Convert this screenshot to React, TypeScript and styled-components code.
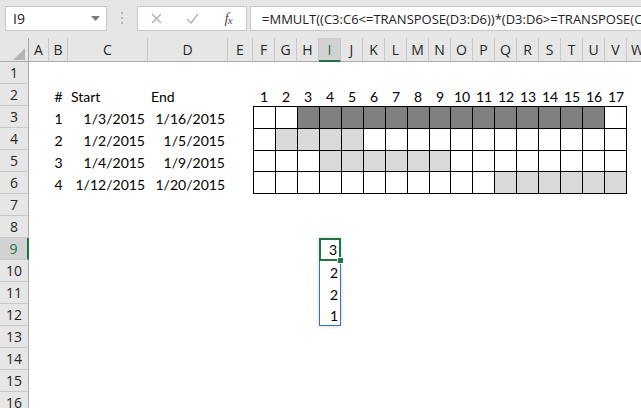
import React from "react";
import styled, { createGlobalStyle } from "styled-components";

const GlobalStyle = createGlobalStyle`
  html, body {
    margin: 0;
    padding: 0;
    background: #ffffff;
  }
  body {
    width: 641px;
    height: 408px;
    overflow: hidden;
  }
`;

const GREEN = "#217346";
const HEADER_BG = "#e6e6e6";
const HEADER_ACTIVE_BG = "#d2d2d2";
const HEADER_LINE = "#c8c8c8";
const HEADER_EDGE = "#ababab";

const COLUMNS = "ABCDEFGHIJKLMNOPQRSTUVW".split("");
const ROW_COUNT = 16;

type Tone = "none" | "dark" | "light";

// day ranges shown in the F3:V6 grid
const spans: [number, number, Tone][] = [
  [3, 16, "dark"],
  [2, 5, "light"],
  [4, 9, "light"],
  [12, 17, "light"],
];

const table = [
  ["1", "1/3/2015", "1/16/2015"],
  ["2", "1/2/2015", "1/5/2015"],
  ["3", "1/4/2015", "1/9/2015"],
  ["4", "1/12/2015", "1/20/2015"],
];

const results = ["3", "2", "2", "1"];

const Window = styled.div`
  width: 641px;
  height: 408px;
  overflow: hidden;
  background: #ffffff;
  display: flex;
  flex-direction: column;
`;

const Toolbar = styled.div`
  flex: none;
  height: 38px;
  box-sizing: border-box;
  padding: 6px 0 0 5px;
  background: ${HEADER_BG};
  display: flex;
  align-items: flex-start;
  font-family: "Open Sans", "Noto Sans", sans-serif;
  font-size: 14px;
  color: #222;
`;

const NameBox = styled.div`
  width: 102px;
  height: 25px;
  box-sizing: border-box;
  border: 1px solid #c6c6c6;
  background: #ffffff;
  display: flex;
  align-items: center;
  justify-content: space-between;
  padding: 0 6px 0 7px;
`;

const Grip = styled.div`
  width: 30px;
  height: 25px;
  display: flex;
  align-items: center;
  justify-content: center;
`;

const FxBox = styled.div`
  width: 110px;
  height: 25px;
  box-sizing: border-box;
  border: 1px solid #c6c6c6;
  background: #ffffff;
  display: flex;
  align-items: center;
`;

const FxSlot = styled.div`
  width: 36px;
  height: 100%;
  display: flex;
  align-items: center;
  justify-content: center;
`;

const FxLabel = styled.span`
  font-family: "Liberation Serif", serif;
  font-style: italic;
  font-size: 15px;
  color: #555;
  letter-spacing: -1px;

  sub {
    font-size: 11px;
    vertical-align: -1px;
  }
`;

const FormulaInput = styled.div`
  flex: 1;
  min-width: 0;
  height: 25px;
  margin-left: 3px;
  box-sizing: border-box;
  border: 1px solid #c6c6c6;
  border-right: none;
  background: #ffffff;
  padding-left: 11px;
  display: flex;
  align-items: center;
  white-space: nowrap;
  overflow: hidden;
  font-size: 13px;
`;

const Sheet = styled.div`
  display: grid;
  grid-template-columns: 29px 20px 19px 80px 80px 25px repeat(18, 22px);
  grid-template-rows: 24px repeat(${ROW_COUNT}, 22px);
  font-family: Lato, "Liberation Sans", sans-serif;
  font-size: 14px;
  color: #000;
`;

const Corner = styled.div`
  grid-column: 1;
  grid-row: 1;
  background: ${HEADER_BG};
  border-right: 1px solid ${HEADER_EDGE};
  border-bottom: 1px solid ${HEADER_EDGE};
  display: flex;
  align-items: flex-end;
  justify-content: flex-end;
  padding: 0 3px 1px 0;
`;

const ColHeader = styled.div<{ $c: number; $active?: boolean }>`
  grid-column: ${(p) => p.$c};
  grid-row: 1;
  box-sizing: border-box;
  background: ${(p) => (p.$active ? HEADER_ACTIVE_BG : HEADER_BG)};
  border-right: 1px solid ${HEADER_LINE};
  border-bottom: ${(p) =>
    p.$active ? `2px solid ${GREEN}` : `1px solid ${HEADER_EDGE}`};
  color: ${(p) => (p.$active ? GREEN : "#262626")};
  font-family: "Open Sans", "Noto Sans", sans-serif;
  font-size: 14px;
  display: flex;
  align-items: center;
  justify-content: center;
  overflow: hidden;
`;

const RowHeader = styled.div<{ $r: number; $active?: boolean }>`
  grid-column: 1;
  grid-row: ${(p) => p.$r};
  box-sizing: border-box;
  background: ${(p) => (p.$active ? HEADER_ACTIVE_BG : HEADER_BG)};
  border-bottom: 1px solid ${HEADER_LINE};
  border-right: ${(p) =>
    p.$active ? `2px solid ${GREEN}` : `1px solid ${HEADER_EDGE}`};
  color: ${(p) => (p.$active ? GREEN : "#262626")};
  font-family: "Open Sans", "Noto Sans", sans-serif;
  font-size: 14px;
  display: flex;
  align-items: center;
  justify-content: center;
`;

const Cell = styled.div<{ $c: number; $r: number; $align: string }>`
  grid-column: ${(p) => p.$c};
  grid-row: ${(p) => p.$r};
  box-sizing: border-box;
  padding: 0 3px 1px;
  display: flex;
  align-items: flex-end;
  justify-content: ${(p) => p.$align};
  line-height: 17px;
  white-space: nowrap;
`;

const Chart = styled.div`
  grid-column: 7 / 24;
  grid-row: 4 / 8;
  display: grid;
  grid-template-columns: repeat(17, 1fr);
  grid-template-rows: repeat(4, 1fr);
  gap: 1px;
  padding: 1px;
  background: #000;
`;

const Day = styled.div<{ $tone: Tone }>`
  background: ${(p) =>
    p.$tone === "dark" ? "#808080" : p.$tone === "light" ? "#d9d9d9" : "#ffffff"};
`;

const Selection = styled.div`
  grid-column: 10;
  grid-row: 10 / 14;
  position: relative;
  box-sizing: border-box;
  border: 1px solid #3b6fc1;
  box-shadow: 0 0 4px rgba(0, 0, 0, 0.18);
  display: grid;
  grid-template-rows: repeat(4, 1fr);
`;

const Result = styled.div<{ $active?: boolean }>`
  position: relative;
  box-sizing: border-box;
  margin: ${(p) => (p.$active ? "-1px -1px 0" : "0")};
  border: ${(p) => (p.$active ? `2px solid ${GREEN}` : "none")};
  padding: 0 2px 1px;
  display: flex;
  align-items: flex-end;
  justify-content: flex-end;
  line-height: 17px;
`;

const FillHandle = styled.div`
  position: absolute;
  right: -5px;
  bottom: -5px;
  width: 5px;
  height: 5px;
  background: ${GREEN};
  border: 1px solid #ffffff;
`;

export default function App() {
  return (
    <>
      <GlobalStyle />
      <Window>
        <Toolbar>
          <NameBox>
            <span>I9</span>
            <svg width="9" height="5" viewBox="0 0 9 5">
              <polygon points="0,0 9,0 4.5,5" fill="#7a7a7a" />
            </svg>
          </NameBox>
          <Grip>
            <svg width="3" height="13" viewBox="0 0 3 13">
              <rect x="0" y="0" width="2" height="2" fill="#b4b4b4" />
              <rect x="0" y="5" width="2" height="2" fill="#b4b4b4" />
              <rect x="0" y="10" width="2" height="2" fill="#b4b4b4" />
            </svg>
          </Grip>
          <FxBox>
            <FxSlot>
              <svg width="11" height="11" viewBox="0 0 11 11">
                <path d="M1 1 L10 10 M10 1 L1 10" stroke="#b0b0b0" strokeWidth="1.3" />
              </svg>
            </FxSlot>
            <FxSlot>
              <svg width="13" height="11" viewBox="0 0 13 11">
                <path d="M1 6 L5 10 L12 1" stroke="#b0b0b0" strokeWidth="1.3" fill="none" />
              </svg>
            </FxSlot>
            <FxSlot>
              <FxLabel>
                f<sub>x</sub>
              </FxLabel>
            </FxSlot>
          </FxBox>
          <FormulaInput>
            =MMULT((C3:C6&lt;=TRANSPOSE(D3:D6))*(D3:D6&gt;=TRANSPOSE(C3:C6)),{"{1;1;1;1}"})
          </FormulaInput>
        </Toolbar>

        <Sheet>
          <Corner>
            <svg width="12" height="12" viewBox="0 0 12 12">
              <polygon points="12,0 12,12 0,12" fill="#b5b5b5" />
            </svg>
          </Corner>
          {COLUMNS.map((letter, i) => (
            <ColHeader key={letter} $c={i + 2} $active={letter === "I"}>
              {letter}
            </ColHeader>
          ))}
          {Array.from({ length: ROW_COUNT }, (_, i) => (
            <RowHeader key={i} $r={i + 2} $active={i + 1 === 9}>
              {i + 1}
            </RowHeader>
          ))}

          <Cell $c={3} $r={3} $align="center">#</Cell>
          <Cell $c={4} $r={3} $align="flex-start">Start</Cell>
          <Cell $c={5} $r={3} $align="flex-start">End</Cell>
          {table.map(([n, start, end], i) => (
            <React.Fragment key={n}>
              <Cell $c={3} $r={i + 4} $align="center">{n}</Cell>
              <Cell $c={4} $r={i + 4} $align="flex-end">{start}</Cell>
              <Cell $c={5} $r={i + 4} $align="flex-end">{end}</Cell>
            </React.Fragment>
          ))}

          {Array.from({ length: 17 }, (_, i) => (
            <Cell key={i} $c={i + 7} $r={3} $align="center">
              {i + 1}
            </Cell>
          ))}

          <Chart>
            {spans.map(([from, to, tone], row) =>
              Array.from({ length: 17 }, (_, d) => (
                <Day
                  key={`${row}-${d}`}
                  $tone={d + 1 >= from && d + 1 <= to ? tone : "none"}
                />
              ))
            )}
          </Chart>

          <Selection>
            {results.map((v, i) => (
              <Result key={i} $active={i === 0}>
                {v}
                {i === 0 && <FillHandle />}
              </Result>
            ))}
          </Selection>
        </Sheet>
      </Window>
    </>
  );
}
